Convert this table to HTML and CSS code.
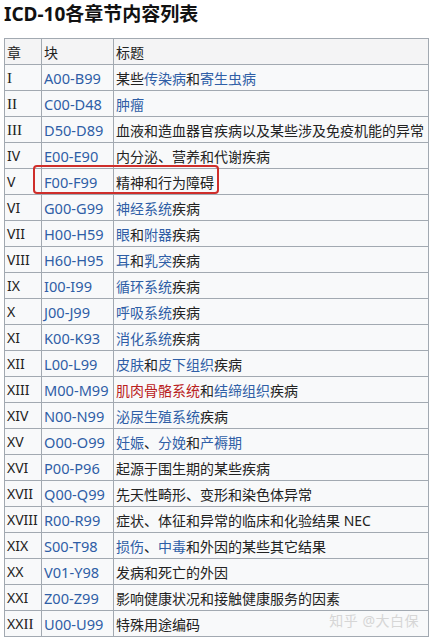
FILE: index.html
```html
<!DOCTYPE html>
<html lang="zh">
<head>
    <meta charset="UTF-8">
    <meta name="viewport" content="width=device-width, initial-scale=1.0">
    <title>ICD-10各章节内容列表</title>
    <link rel="stylesheet" href="styles.css">
</head>
<body>
    <h1>ICD-10各章节内容列表</h1>

    <div class="table-wrap">
        <table class="icd">
            <colgroup>
                <col class="c-chap">
                <col class="c-block">
                <col class="c-title">
            </colgroup>
            <thead>
                <tr><th>章</th><th>块</th><th>标题</th></tr>
            </thead>
            <tbody>
                <tr><td><span class="rn">I</span></td><td><a class="code">A00-B99</a></td><td>某些<a>传染病</a>和<a>寄生虫病</a></td></tr>
                <tr><td><span class="rn">II</span></td><td><a class="code">C00-D48</a></td><td><a>肿瘤</a></td></tr>
                <tr><td><span class="rn">III</span></td><td><a class="code">D50-D89</a></td><td>血液和造血器官疾病以及某些涉及免疫机能的异常</td></tr>
                <tr><td>IV</td><td><a class="code">E00-E90</a></td><td>内分泌、营养和代谢疾病</td></tr>
                <tr><td>V</td><td><a class="code">F00-F99</a></td><td>精神和行为障碍</td></tr>
                <tr><td>VI</td><td><a class="code">G00-G99</a></td><td><a>神经系统</a>疾病</td></tr>
                <tr><td>VII</td><td><a class="code">H00-H59</a></td><td><a>眼</a>和<a>附器</a>疾病</td></tr>
                <tr><td>VIII</td><td><a class="code">H60-H95</a></td><td><a>耳</a>和<a>乳突</a>疾病</td></tr>
                <tr><td>IX</td><td><a class="code">I00-I99</a></td><td><a>循环系统</a>疾病</td></tr>
                <tr><td>X</td><td><a class="code">J00-J99</a></td><td><a>呼吸系统</a>疾病</td></tr>
                <tr><td>XI</td><td><a class="code">K00-K93</a></td><td><a>消化系统</a>疾病</td></tr>
                <tr><td>XII</td><td><a class="code">L00-L99</a></td><td><a>皮肤</a>和<a>皮下组织</a>疾病</td></tr>
                <tr><td>XIII</td><td><a class="code">M00-M99</a></td><td><a class="new">肌肉骨骼系统</a>和<a>结缔组织</a>疾病</td></tr>
                <tr><td>XIV</td><td><a class="code">N00-N99</a></td><td><a>泌尿生殖系统</a>疾病</td></tr>
                <tr><td>XV</td><td><a class="code">O00-O99</a></td><td><a>妊娠</a>、<a>分娩</a>和<a>产褥期</a></td></tr>
                <tr><td>XVI</td><td><a class="code">P00-P96</a></td><td>起源于围生期的某些疾病</td></tr>
                <tr><td>XVII</td><td><a class="code">Q00-Q99</a></td><td>先天性畸形、变形和染色体异常</td></tr>
                <tr><td>XVIII</td><td><a class="code">R00-R99</a></td><td>症状、体征和异常的临床和化验结果 NEC</td></tr>
                <tr><td>XIX</td><td><a class="code">S00-T98</a></td><td><a>损伤</a>、<a>中毒</a>和外因的某些其它结果</td></tr>
                <tr><td>XX</td><td><a class="code">V01-Y98</a></td><td>发病和死亡的外因</td></tr>
                <tr><td>XXI</td><td><a class="code">Z00-Z99</a></td><td>影响健康状况和接触健康服务的因素</td></tr>
                <tr><td>XX<span class="rn">II</span></td><td><a class="code">U00-U99</a></td><td>特殊用途编码</td></tr>
            </tbody>
        </table>

        <!-- red highlight drawn over chapter V -->
        <div class="highlight"></div>
        <div class="watermark">知乎 @大白保</div>
    </div>
</body>
</html>
```

FILE: styles.css
```css
body {
    font-family: "Noto Sans", "Noto Sans CJK SC", sans-serif;
    background-color: #ffffff;
    color: #222222;
    margin: 0;
    padding: 0 4px;
}
h1 {
    font-size: 19px;
    line-height: 28px;
    font-weight: bold;
    color: #111111;
    margin: 0 0 10px;
}
.table-wrap {
    position: relative;
    width: 425px;
}
.icd {
    width: 425px;
    border-collapse: collapse;
    table-layout: fixed;
    font-size: 14px;
    background-color: #f8f9fa;
    border: 1px solid #a2a9b1;
}
.c-chap {
    width: 37px;
}
.c-block {
    width: 72px;
}
.icd th,
.icd td {
    border: 1px solid #a2a9b1;
    height: 25px;
    padding: 0 2px;
    text-align: left;
    font-weight: normal;
    white-space: nowrap;
    overflow: hidden;
}
.icd th {
    background-color: #f4f4f5;
}
.icd a {
    color: #2f5ea6;
    text-decoration: none;
}
.icd a.code {
    font-size: 14.6px;
}
.icd a.new {
    color: #ba2020;
}
.rn {
    font-family: "Liberation Serif", serif;
    font-size: 15px;
}
.highlight {
    position: absolute;
    left: 29px;
    top: 127px;
    width: 182px;
    height: 25px;
    border: 2.5px solid #cf2e2a;
    border-radius: 4px;
}
.watermark {
    position: absolute;
    right: 10px;
    bottom: 7px;
    font-size: 14px;
    color: #d6d6d6;
    letter-spacing: 0.5px;
}
```
